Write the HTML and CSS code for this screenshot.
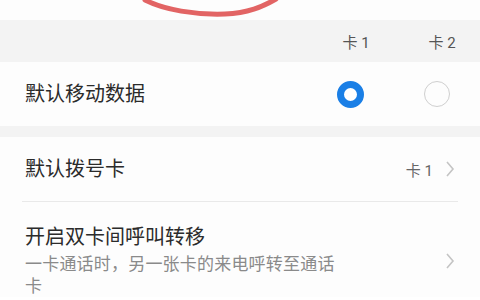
FILE: index.html
```html
<!DOCTYPE html>
<html lang="zh-CN">
<head>
  <meta charset="utf-8" />
  <title>双卡管理</title>
  <meta name="viewport" content="width=device-width, initial-scale=1.0" />
  <link rel="stylesheet" href="styles.css">
</head>

<body>
  <div class="top">
    <svg class="scribble" width="480" height="20" viewBox="0 0 480 20">
      <path d="M145 0 C 165 10, 195 15, 225 14 C 248 13, 262 7, 276 -1" fill="none" stroke="#e26464" stroke-width="5" stroke-linecap="round" />
    </svg>
  </div>

  <div class="sim-header">
    <div class="sim-col">卡 1</div>
    <div class="sim-col">卡 2</div>
  </div>

  <div class="row data-row">
    <div class="label">默认移动数据</div>
    <div class="sim-col"><span class="radio checked"></span></div>
    <div class="sim-col"><span class="radio"></span></div>
  </div>

  <div class="gap"></div>

  <div class="list">
    <div class="row item">
      <div class="label">默认拨号卡</div>
      <div class="value">卡 1</div>
      <svg class="chevron" width="10" height="16" viewBox="0 0 10 16">
        <path d="M2 1 L8 8 L2 15" fill="none" stroke="#c4c4c4" stroke-width="1.6" />
      </svg>
    </div>
    <div class="divider"></div>
    <div class="row item tall">
      <div class="text">
        <div class="label">开启双卡间呼叫转移</div>
        <div class="sub">一卡通话时，另一张卡的来电呼转至通话卡</div>
      </div>
      <svg class="chevron" width="10" height="16" viewBox="0 0 10 16">
        <path d="M2 1 L8 8 L2 15" fill="none" stroke="#c4c4c4" stroke-width="1.6" />
      </svg>
    </div>
  </div>
</body>
</html>
```

FILE: styles.css
```css
html, body {
  margin: 0;
  padding: 0;
  height: 100%;
  overflow: hidden;
  font-family: "Roboto", "Noto Sans CJK SC", sans-serif;
  background-color: #ffffff;
  color: #2b2b2b;
}

.top {
  position: relative;
  height: 20px;
  background-color: #fdfdfd;
}

.scribble {
  position: absolute;
  top: 0;
  left: 0;
}

.sim-header {
  display: flex;
  justify-content: flex-end;
  align-items: center;
  height: 42px;
  background-color: #f3f3f3;
  font-size: 15px;
  color: #555;
}

.sim-col {
  width: 86px;
  display: flex;
  justify-content: center;
  align-items: center;
}

.sim-header .sim-col {
  padding-left: 10px;
  box-sizing: border-box;
}

.row {
  display: flex;
  align-items: center;
  background-color: #fdfdfd;
}

.data-row {
  height: 64px;
  padding-left: 25px;
}

.label {
  flex: 1;
  font-size: 20px;
  line-height: 26px;
  color: #2b2b2b;
}

.radio {
  display: block;
  width: 26px;
  height: 26px;
  box-sizing: border-box;
  border: 1.5px solid #cfcfcf;
  border-radius: 50%;
  margin-right: 1px;
}

.radio.checked {
  width: 27px;
  height: 27px;
  border: 7px solid #1a7fe6;
  background-color: #fff;
}

.gap {
  height: 11px;
  background-color: #f3f3f3;
}

.list {
  background-color: #fdfdfd;
}

.item {
  height: 64px;
  padding: 0 25px;
}

.value {
  font-size: 15px;
  color: #666;
  margin-right: 12px;
}

.chevron {
  display: block;
}

.divider {
  height: 1px;
  margin: 0 22px;
  background-color: #e9e9e9;
}

.tall {
  height: auto;
  padding-top: 22px;
  align-items: center;
}

.text {
  flex: 1;
}

.sub {
  width: 322px;
  font-size: 17px;
  line-height: 22px;
  letter-spacing: 0.2px;
  color: #8a8a8a;
  margin-top: 3px;
}
```
